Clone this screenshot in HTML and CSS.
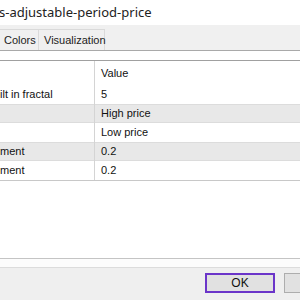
FILE: index.html
```html
<!DOCTYPE html>
<html lang="en">
<head>
    <meta charset="UTF-8">
    <title>Indicator properties</title>
    <link rel="stylesheet" href="styles.css">
</head>
<body>
    <div class="window">
        <!-- Title bar (window is cropped on the left) -->
        <div class="titlebar">s-adjustable-period-price</div>

        <!-- Tabs -->
        <div class="tabstrip">
            <div class="tab colors">Colors</div>
            <div class="tab visual">Visualization</div>
        </div>

        <!-- Inputs table -->
        <div class="panel">
            <div class="grid">
                <div class="row head">
                    <div class="cell name"></div>
                    <div class="cell value">Value</div>
                </div>
                <div class="row">
                    <div class="cell name">ilt in fractal</div>
                    <div class="cell value">5</div>
                </div>
                <div class="row shaded">
                    <div class="cell name"></div>
                    <div class="cell value">High price</div>
                </div>
                <div class="row">
                    <div class="cell name"></div>
                    <div class="cell value">Low price</div>
                </div>
                <div class="row shaded">
                    <div class="cell name">ment</div>
                    <div class="cell value">0.2</div>
                </div>
                <div class="row">
                    <div class="cell name">ment</div>
                    <div class="cell value">0.2</div>
                </div>
            </div>
        </div>

        <!-- Buttons (second one is cut by the right edge) -->
        <div class="footer">
            <div class="strip"></div>
            <div class="buttons">
                <button class="btn default">OK</button>
                <button class="btn"></button>
            </div>
        </div>
    </div>
</body>
</html>
```

FILE: styles.css
```css
body {
    margin: 0;
    padding: 0;
    background-color: #ffffff;
    font-family: "Liberation Sans", Arial, sans-serif;
    color: #111111;
    overflow: hidden;
}

.window {
    width: 300px;
    height: 300px;
    display: flex;
    flex-direction: column;
    overflow: hidden;
}

.titlebar {
    height: 25px;
    line-height: 24px;
    font-family: "Noto Sans", "Open Sans", sans-serif;
    font-size: 13px;
    color: #222222;
    margin-left: -1px;
    white-space: nowrap;
}

/* Tab strip */
.tabstrip {
    height: 26px;
    box-sizing: border-box;
    background-color: #f0f0f0;
    border-bottom: 1px solid #a9a9a9;
    display: flex;
    align-items: flex-end;
}

.tab {
    height: 21px;
    box-sizing: border-box;
    font-size: 11px;
    line-height: 20px;
    border: 1px solid #dadada;
    border-bottom: none;
    border-left: none;
    background-color: #f0f0f0;
    color: #222222;
}

.tab.colors {
    width: 39px;
    padding-left: 4px;
}

.tab.visual {
    width: 66px;
    padding-left: 5px;
}

/* Inputs table */
.panel {
    flex: 1;
    padding-top: 9px;
}

.grid {
    border-top: 1px solid #a0a0a0;
    border-bottom: 1px solid #c8c8c8;
}

.row {
    display: flex;
    height: 19px;
    font-size: 11px;
    line-height: 19px;
}

.row.head {
    height: 24px;
    line-height: 24px;
}

.row.shaded {
    background-color: #e8e8e8;
    box-shadow: inset 0 1px 0 #dcdcdc, inset 0 -1px 0 #dcdcdc;
}

.cell {
    box-sizing: border-box;
    white-space: nowrap;
}

.cell.name {
    width: 95px;
    border-right: 1px solid #d4d4d4;
}

.cell.value {
    flex: 1;
    padding-left: 6px;
}

/* Footer with buttons */
.footer {
    height: 42px;
    display: flex;
    flex-direction: column;
}

.strip {
    height: 10px;
    box-sizing: border-box;
    border-top: 1px solid #c4c4c4;
    border-bottom: 1px solid #dcdcdc;
    background-color: #fcfcfc;
}

.buttons {
    flex: 1;
    background-color: #efefef;
    display: flex;
    align-items: flex-start;
    padding-top: 5px;
    padding-left: 205px;
    gap: 9px;
    overflow: hidden;
}

.btn {
    height: 20px;
    width: 70px;
    flex-shrink: 0;
    box-sizing: border-box;
    background-color: #e1e1e1;
    border: 1px solid #adadad;
    font-family: "Liberation Sans", Arial, sans-serif;
    font-size: 12px;
    color: #111111;
    padding: 0;
}

.btn.default {
    border: 2px solid #6b35c9;
}
```
